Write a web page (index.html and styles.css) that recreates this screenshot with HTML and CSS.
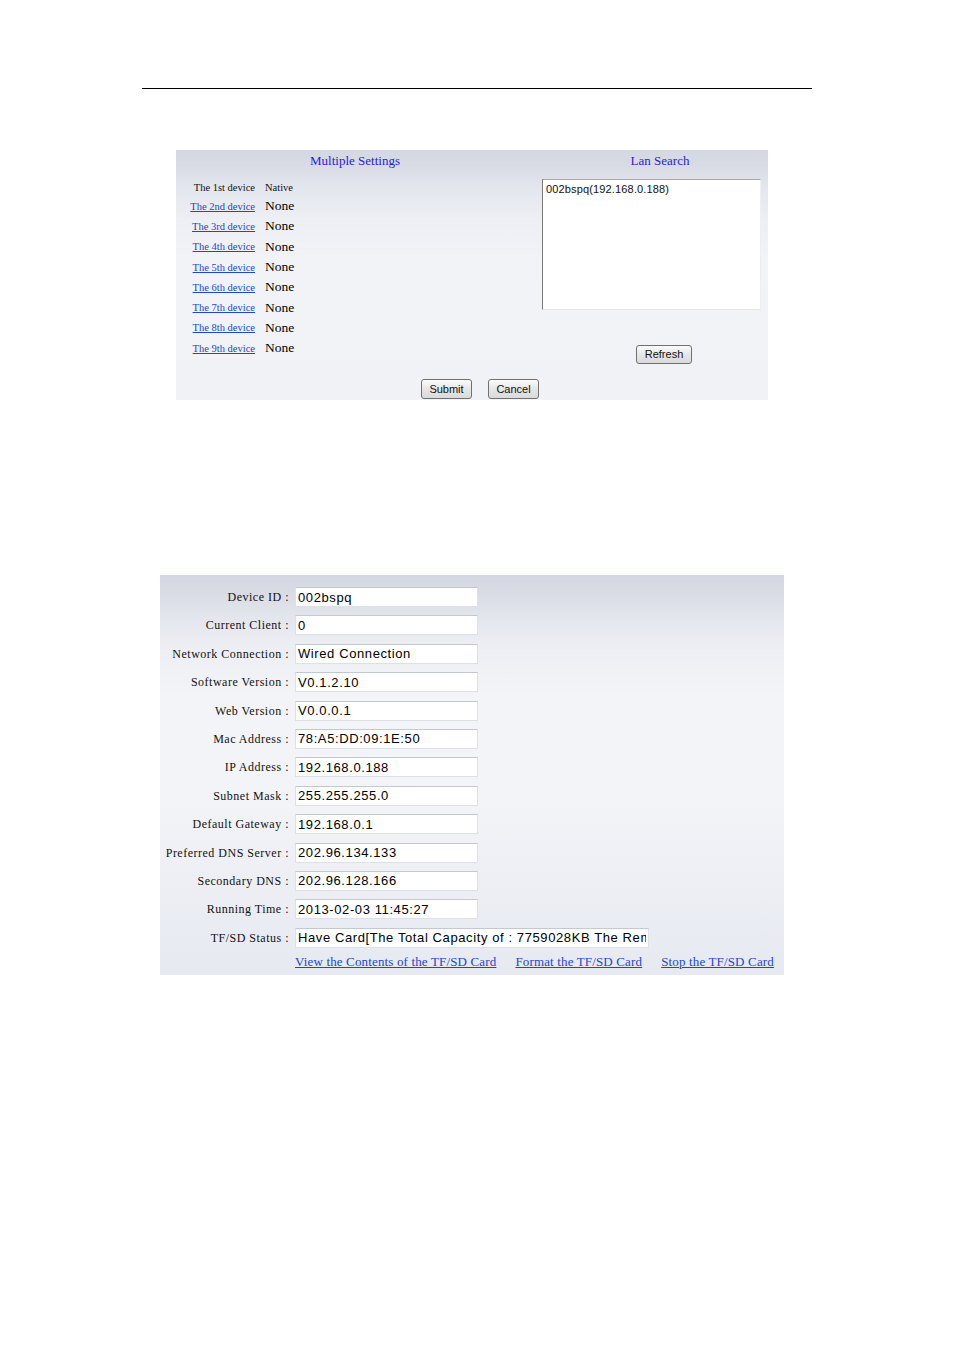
FILE: index.html
```html
<!DOCTYPE html>
<html>
<head>
<meta charset="utf-8">
<title>Device Settings</title>
<link rel="stylesheet" href="styles.css">
</head>
<body>
<div class="rule"></div>

<div class="panel panel-multi">
  <div class="multi-top">
    <div class="multi-left">
      <div class="col-head">Multiple Settings</div>
      <div class="dev-grid">
        <span class="dev-label">The 1st device</span><span class="dev-native">Native</span>
        <a class="dev-link" href="#">The 2nd device</a><span class="dev-val">None</span>
        <a class="dev-link" href="#">The 3rd device</a><span class="dev-val">None</span>
        <a class="dev-link" href="#">The 4th device</a><span class="dev-val">None</span>
        <a class="dev-link" href="#">The 5th device</a><span class="dev-val">None</span>
        <a class="dev-link" href="#">The 6th device</a><span class="dev-val">None</span>
        <a class="dev-link" href="#">The 7th device</a><span class="dev-val">None</span>
        <a class="dev-link" href="#">The 8th device</a><span class="dev-val">None</span>
        <a class="dev-link" href="#">The 9th device</a><span class="dev-val">None</span>
      </div>
    </div>
    <div class="multi-right">
      <div class="col-head col-head-lan">Lan Search</div>
      <div class="lan-box">002bspq(192.168.0.188)</div>
      <div class="refresh-wrap"><button class="btn btn-refresh">Refresh</button></div>
    </div>
  </div>
  <div class="multi-actions">
    <button class="btn btn-submit">Submit</button>
    <button class="btn btn-cancel">Cancel</button>
  </div>
</div>

<div class="panel panel-status">
  <div class="status-grid">
    <label class="st-label">Device ID :</label><input class="st-input" value="002bspq">
    <label class="st-label">Current Client :</label><input class="st-input" value="0">
    <label class="st-label">Network Connection :</label><input class="st-input" value="Wired Connection">
    <label class="st-label">Software Version :</label><input class="st-input" value="V0.1.2.10">
    <label class="st-label">Web Version :</label><input class="st-input" value="V0.0.0.1">
    <label class="st-label">Mac Address :</label><input class="st-input" value="78:A5:DD:09:1E:50">
    <label class="st-label">IP Address :</label><input class="st-input" value="192.168.0.188">
    <label class="st-label">Subnet Mask :</label><input class="st-input" value="255.255.255.0">
    <label class="st-label">Default Gateway :</label><input class="st-input" value="192.168.0.1">
    <label class="st-label">Preferred DNS Server :</label><input class="st-input" value="202.96.134.133">
    <label class="st-label">Secondary DNS :</label><input class="st-input" value="202.96.128.166">
    <label class="st-label">Running Time :</label><input class="st-input" value="2013-02-03 11:45:27">
    <label class="st-label">TF/SD Status :</label><input class="st-input st-input-wide" value="Have Card[The Total Capacity of : 7759028KB The Remaining Capacity of : 7740416KB]">
  </div>
  <div class="card-links">
    <a href="#" class="card-link">View the Contents of the TF/SD Card</a>
    <a href="#" class="card-link">Format the TF/SD Card</a>
    <a href="#" class="card-link">Stop the TF/SD Card</a>
  </div>
</div>
</body>
</html>
```

FILE: styles.css
```css
html, body {
  margin: 0;
  padding: 0;
  background: #ffffff;
}

body {
  width: 954px;
  height: 1349px;
  font-family: "Liberation Serif", "Times New Roman", serif;
  color: #111;
}

.rule {
  margin: 88px 0 0 142px;
  width: 670px;
  height: 1px;
  background: #000;
}

.panel {
  box-sizing: border-box;
}

/* ---------- Multiple settings panel ---------- */
.panel-multi {
  margin: 61px 0 0 176px;
  width: 592px;
  height: 250px;
  background: linear-gradient(to bottom,
    #d4d8e2 0px, #d9dce5 18px, #e4e7ee 40px, #edeff4 70px,
    #f2f3f7 110px, #f1f2f6 100%);
}

.multi-top {
  display: flex;
  height: 214px;
}

.multi-left {
  width: 358px;
}

.multi-right {
  flex: 1;
}

.col-head {
  height: 29px;
  line-height: 22px;
  text-align: center;
  font-size: 13px;
  color: #2a22d8;
}

.col-head-lan {
  padding-left: 18px;
}

.dev-grid {
  display: grid;
  grid-template-columns: 79px auto;
  grid-template-rows: 17px;
  grid-auto-rows: 20.3px;
  column-gap: 10px;
  align-items: center;
}

.dev-label,
.dev-link {
  text-align: right;
  font-size: 10.5px;
  white-space: nowrap;
}

.dev-label {
  color: #111;
}

.dev-link {
  color: #2148c8;
  text-decoration: underline;
}

.dev-native {
  font-size: 10.5px;
  color: #111;
}

.dev-val {
  font-size: 13.5px;
  color: #000;
}

.lan-box {
  margin-left: 8px;
  width: 219px;
  height: 131px;
  box-sizing: border-box;
  background: #fff;
  border-left: 1px solid #7a7a7a;
  border-top: 1px solid #a8a8a8;
  border-right: 1px solid #eceef2;
  border-bottom: 1px solid #e4e6ea;
  padding: 2px 3px;
  font-family: "Liberation Sans", Arial, sans-serif;
  font-size: 11px;
  letter-spacing: 0.15px;
  line-height: 14px;
  color: #111;
}

.refresh-wrap {
  margin-top: 34px;
  padding-left: 102px;
}

.btn {
  box-sizing: border-box;
  height: 20px;
  padding: 0;
  font-family: "Liberation Sans", Arial, sans-serif;
  font-size: 11px;
  color: #111;
  background: linear-gradient(to bottom, #fbfbfb, #e6e6e6 50%, #dadada);
  border: 1px solid #707070;
  border-radius: 3px;
}

.btn-refresh {
  width: 56px;
  height: 19px;
}

.btn-submit,
.btn-cancel {
  width: 51px;
}

.multi-actions {
  display: flex;
  justify-content: center;
  gap: 16px;
  margin-top: 15px;
  padding-left: 16px;
}

/* ---------- Status panel ---------- */
.panel-status {
  margin: 175px 0 0 160px;
  width: 624px;
  height: 400px;
  padding-top: 12px;
  background: linear-gradient(to bottom,
    #d4d8e2 0px, #d8dbe4 16px, #e2e5ec 40px, #eceef3 70px,
    #f3f4f7 120px, #f3f4f7 55%, #eceef4 80%, #e6e9f0 100%);
}

.status-grid {
  display: grid;
  grid-template-columns: 129px auto;
  grid-auto-rows: 20px;
  column-gap: 6px;
  row-gap: 8.4px;
  align-items: center;
}

.st-label {
  text-align: right;
  font-size: 12px;
  letter-spacing: 0.5px;
  line-height: 20px;
  color: #111;
  white-space: nowrap;
}

.st-input {
  box-sizing: border-box;
  width: 183px;
  height: 20px;
  margin: 0;
  padding: 0 2px;
  background: #fff;
  border: 1px solid #dde0e6;
  border-top-color: #c4c8d0;
  font-family: "Liberation Sans", Arial, sans-serif;
  font-size: 13px;
  letter-spacing: 0.6px;
  color: #000;
  outline: none;
}

.st-input-wide {
  width: 354px;
}

.card-links {
  display: flex;
  gap: 19px;
  margin-top: 7px;
  padding-left: 135px;
  line-height: 14px;
}

.card-link {
  font-size: 13px;
  letter-spacing: 0.15px;
  color: #2148c8;
  text-decoration: underline;
  white-space: nowrap;
}
```
